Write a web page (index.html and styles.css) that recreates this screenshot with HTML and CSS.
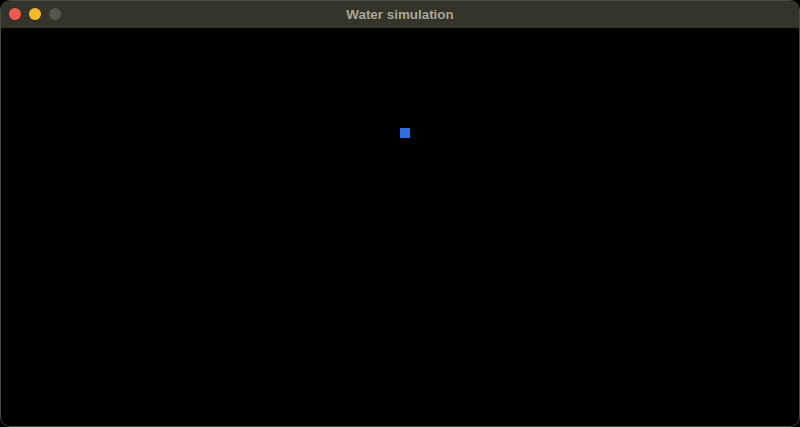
FILE: index.html
```html
<!DOCTYPE html>
<html>
<head>
<meta charset="utf-8">
<link rel="stylesheet" href="styles.css">
</head>
<body>
<div class="window">
  <div class="titlebar">
    <div class="lights">
      <span class="light red"></span>
      <span class="light yellow"></span>
      <span class="light grey"></span>
    </div>
    <div class="title">Water simulation</div>
  </div>
  <div class="content">
    <div class="particle"></div>
  </div>
</div>
</body>
</html>
```
FILE: styles.css
```css
html, body {
  margin: 0;
  padding: 0;
  background: #000;
  width: 800px;
  height: 427px;
  overflow: hidden;
}
.window {
  width: 800px;
  height: 427px;
  box-sizing: border-box;
  border: 1px solid #4a4a3e;
  border-radius: 10px;
  overflow: hidden;
  display: flex;
  flex-direction: column;
  background: #000;
}
.titlebar {
  height: 27px;
  flex: none;
  background: #35342a;
  position: relative;
  display: flex;
  align-items: center;
  justify-content: center;
}
.lights {
  position: absolute;
  left: 8px;
  top: 7px;
  display: flex;
  gap: 8px;
}
.light {
  width: 12px;
  height: 12px;
  border-radius: 50%;
  display: block;
}
.red { background: #ec5a50; }
.yellow { background: #f5b92c; }
.grey { background: #56554d; }
.title {
  font-family: "Liberation Sans", Arial, sans-serif;
  font-weight: bold;
  font-size: 13.4px;
  color: #a6a596;
}
.content {
  flex: 1;
  background: #000;
  padding: 100px 0 0 399px;
}
.particle {
  width: 10px;
  height: 10px;
  background: #2f6de0;
}
```
